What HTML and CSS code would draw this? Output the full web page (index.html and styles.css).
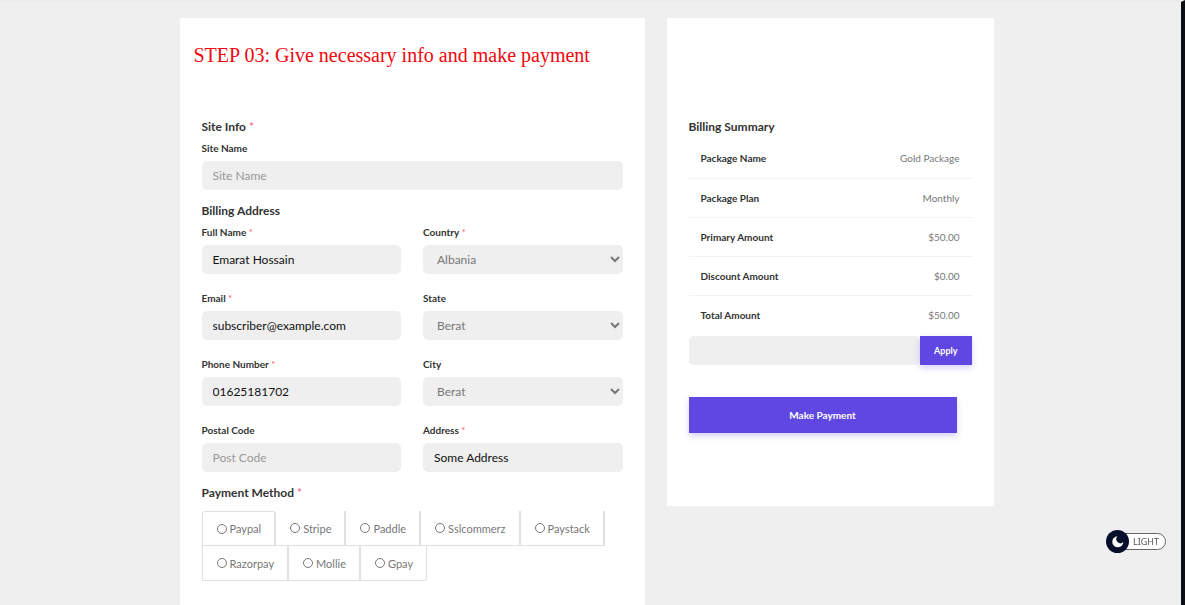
FILE: index.html
```html
<!DOCTYPE html>
<html lang="en">
<head>
    <meta charset="UTF-8">
    <meta name="viewport" content="width=device-width, initial-scale=1.0">
    <title>Make Payment</title>
    <link rel="stylesheet" href="styles.css">
</head>
<body>

    <main class="checkout">
        <form class="card" id="order-form">
            <h1 class="step-title">STEP 03: Give necessary info and make payment</h1>

            <div class="form-body">
                <h2>Site Info <span class="required">*</span></h2>
                <div class="field">
                    <label for="site-name">Site Name</label>
                    <input type="text" id="site-name" placeholder="Site Name">
                </div>

                <h2>Billing Address</h2>
                <div class="fields">
                    <div class="field">
                        <label for="full-name">Full Name <span class="required">*</span></label>
                        <input type="text" id="full-name" value="Emarat Hossain">
                    </div>
                    <div class="field">
                        <label for="country">Country <span class="required">*</span></label>
                        <select id="country"><option>Albania</option></select>
                    </div>
                    <div class="field">
                        <label for="email">Email <span class="required">*</span></label>
                        <input type="email" id="email" value="subscriber@example.com">
                    </div>
                    <div class="field">
                        <label for="state">State</label>
                        <select id="state"><option>Berat</option></select>
                    </div>
                    <div class="field">
                        <label for="phone">Phone Number <span class="required">*</span></label>
                        <input type="tel" id="phone" value="01625181702">
                    </div>
                    <div class="field">
                        <label for="city">City</label>
                        <select id="city"><option>Berat</option></select>
                    </div>
                    <div class="field">
                        <label for="post-code">Postal Code</label>
                        <input type="text" id="post-code" placeholder="Post Code">
                    </div>
                    <div class="field">
                        <label for="address">Address <span class="required">*</span></label>
                        <input type="text" id="address" value="Some Address">
                    </div>
                </div>

                <h2>Payment Method <span class="required">*</span></h2>
                <div class="methods">
                    <label class="method first"><input type="radio" name="method"> Paypal</label>
                    <label class="method"><input type="radio" name="method"> Stripe</label>
                    <label class="method"><input type="radio" name="method"> Paddle</label>
                    <label class="method"><input type="radio" name="method"> Sslcommerz</label>
                    <label class="method"><input type="radio" name="method"> Paystack</label>
                    <label class="method row-start"><input type="radio" name="method"> Razorpay</label>
                    <label class="method"><input type="radio" name="method"> Mollie</label>
                    <label class="method last"><input type="radio" name="method"> Gpay</label>
                </div>
            </div>
        </form>

        <aside class="card summary">
            <h2>Billing Summary</h2>
            <table class="summary-table">
                <tr><th scope="row">Package Name</th><td>Gold Package</td></tr>
                <tr><th scope="row">Package Plan</th><td>Monthly</td></tr>
                <tr><th scope="row">Primary Amount</th><td>$50.00</td></tr>
                <tr><th scope="row">Discount Amount</th><td>$0.00</td></tr>
                <tr><th scope="row">Total Amount</th><td>$50.00</td></tr>
            </table>
            <div class="coupon">
                <input type="text" aria-label="Coupon code">
                <button type="button" class="btn">Apply</button>
            </div>
            <button type="submit" form="order-form" class="btn pay">Make Payment</button>
        </aside>
    </main>

    <button type="button" class="theme-switch">
        <svg class="theme-icon" viewBox="0 0 22 22" aria-hidden="true">
            <circle cx="11" cy="11" r="11" fill="#050e2b"/>
            <path d="M11 6 A5.3 5.3 0 1 0 16.6 11.4 A3.5 3.5 0 0 1 11 6 Z" fill="#fff"/>
        </svg>
        <span class="theme-label">LIGHT</span>
    </button>

</body>
</html>
```
FILE: styles.css
```css
* {
    box-sizing: border-box;
}

body {
    margin: 0;
    min-height: 100vh;
    padding-right: 8px;
    background-color: #efefef;
    border-top: 2px solid #ebebeb;
    border-right: 4px solid #0c0f12;
    color: #333;
    font-family: Lato, sans-serif;
    font-size: 11px;
}

input, select, button {
    font-family: inherit;
}

.checkout {
    display: grid;
    grid-template-columns: 465fr 327fr;
    gap: 22px;
    align-items: start;
    max-width: 814px;
    min-height: calc(100vh - 2px);
    margin: 0 auto;
    padding-top: 16px;
}

.card {
    background-color: #fff;
}

#order-form {
    align-self: stretch;
}

.step-title {
    margin: 0;
    padding: 25px 14px 51px;
    color: #f2060d;
    font-family: "Liberation Serif", serif;
    font-size: 20px;
    font-weight: normal;
    line-height: 24px;
}

.form-body {
    padding: 0 22px 24px;
}

h2 {
    margin: 0 0 5px;
    font-size: 12px;
    line-height: 18px;
}

.required {
    color: #ff5c6c;
    font-weight: normal;
}

.field {
    display: flex;
    flex-direction: column;
    gap: 6px;
}

.field label {
    font-size: 10px;
    font-weight: bold;
    line-height: 14px;
}

.fields {
    display: grid;
    grid-template-columns: 1fr 1fr;
    gap: 17px 22px;
}

.field + h2,
.fields + h2 {
    margin-top: 12px;
}

.field input,
.field select,
.coupon input {
    width: 100%;
    height: 29px;
    padding: 0 11px;
    border: none;
    border-radius: 5px;
    background-color: #efefef;
    color: #111;
    font-size: 12px;
}

.field select {
    padding: 0 0 0 10px;
    color: #777;
}

.field input::placeholder {
    color: #999;
}

.methods {
    display: flex;
    flex-wrap: wrap;
    padding-top: 4px;
}

.method {
    display: flex;
    align-items: center;
    gap: 3px;
    height: 35px;
    padding: 0 13px 0 14px;
    border-right: 2px solid #e0e0e0;
    border-bottom: 1px solid #e0e0e0;
    color: #777;
}

.method input {
    width: 10px;
    height: 10px;
    margin: 0;
}

.method.first {
    border-top: 1px solid #e0e0e0;
    border-left: 1px solid #e0e0e0;
    border-radius: 3px 3px 0 0;
}

.method.row-start {
    border-left: 1px solid #e0e0e0;
}

.method.last {
    border-right-width: 1px;
    border-radius: 0 0 3px 0;
}

/* billing summary */
.summary {
    padding: 100px 22px 73px;
}

.summary h2 {
    margin-bottom: 3px;
}

.summary-table {
    width: 100%;
    border-collapse: collapse;
}

.summary-table th,
.summary-table td {
    height: 39px;
    padding: 0 12px;
    font-size: 10px;
    text-align: left;
}

.summary-table td {
    color: #777;
    text-align: right;
}

.summary-table tr + tr {
    border-top: 1px solid #f2f2f2;
}

.coupon {
    display: flex;
    margin-top: 2px;
}

.btn {
    flex: none;
    padding: 0 14px;
    border: none;
    background-color: #6147e1;
    box-shadow: 0 3px 6px rgba(97, 71, 225, 0.25);
    color: #fff;
    font-size: 9px;
    font-weight: bold;
}

.coupon input {
    flex: 1;
    min-width: 0;
}

.btn.pay {
    width: calc(100% - 15px);
    height: 36px;
    margin-top: 32px;
    font-size: 10px;
}

.theme-switch {
    position: fixed;
    right: 19px;
    bottom: 52px;
    display: flex;
    align-items: center;
    padding: 0;
    border: none;
    background: none;
}

.theme-icon {
    z-index: 1;
    width: 23px;
    height: 23px;
}

.theme-label {
    margin-left: -15px;
    padding: 0 6px 0 18px;
    border: 1px solid #666;
    border-radius: 9px;
    background-color: #fff;
    color: #555;
    font-family: "Noto Sans", sans-serif;
    font-size: 9px;
    line-height: 15px;
}
```
